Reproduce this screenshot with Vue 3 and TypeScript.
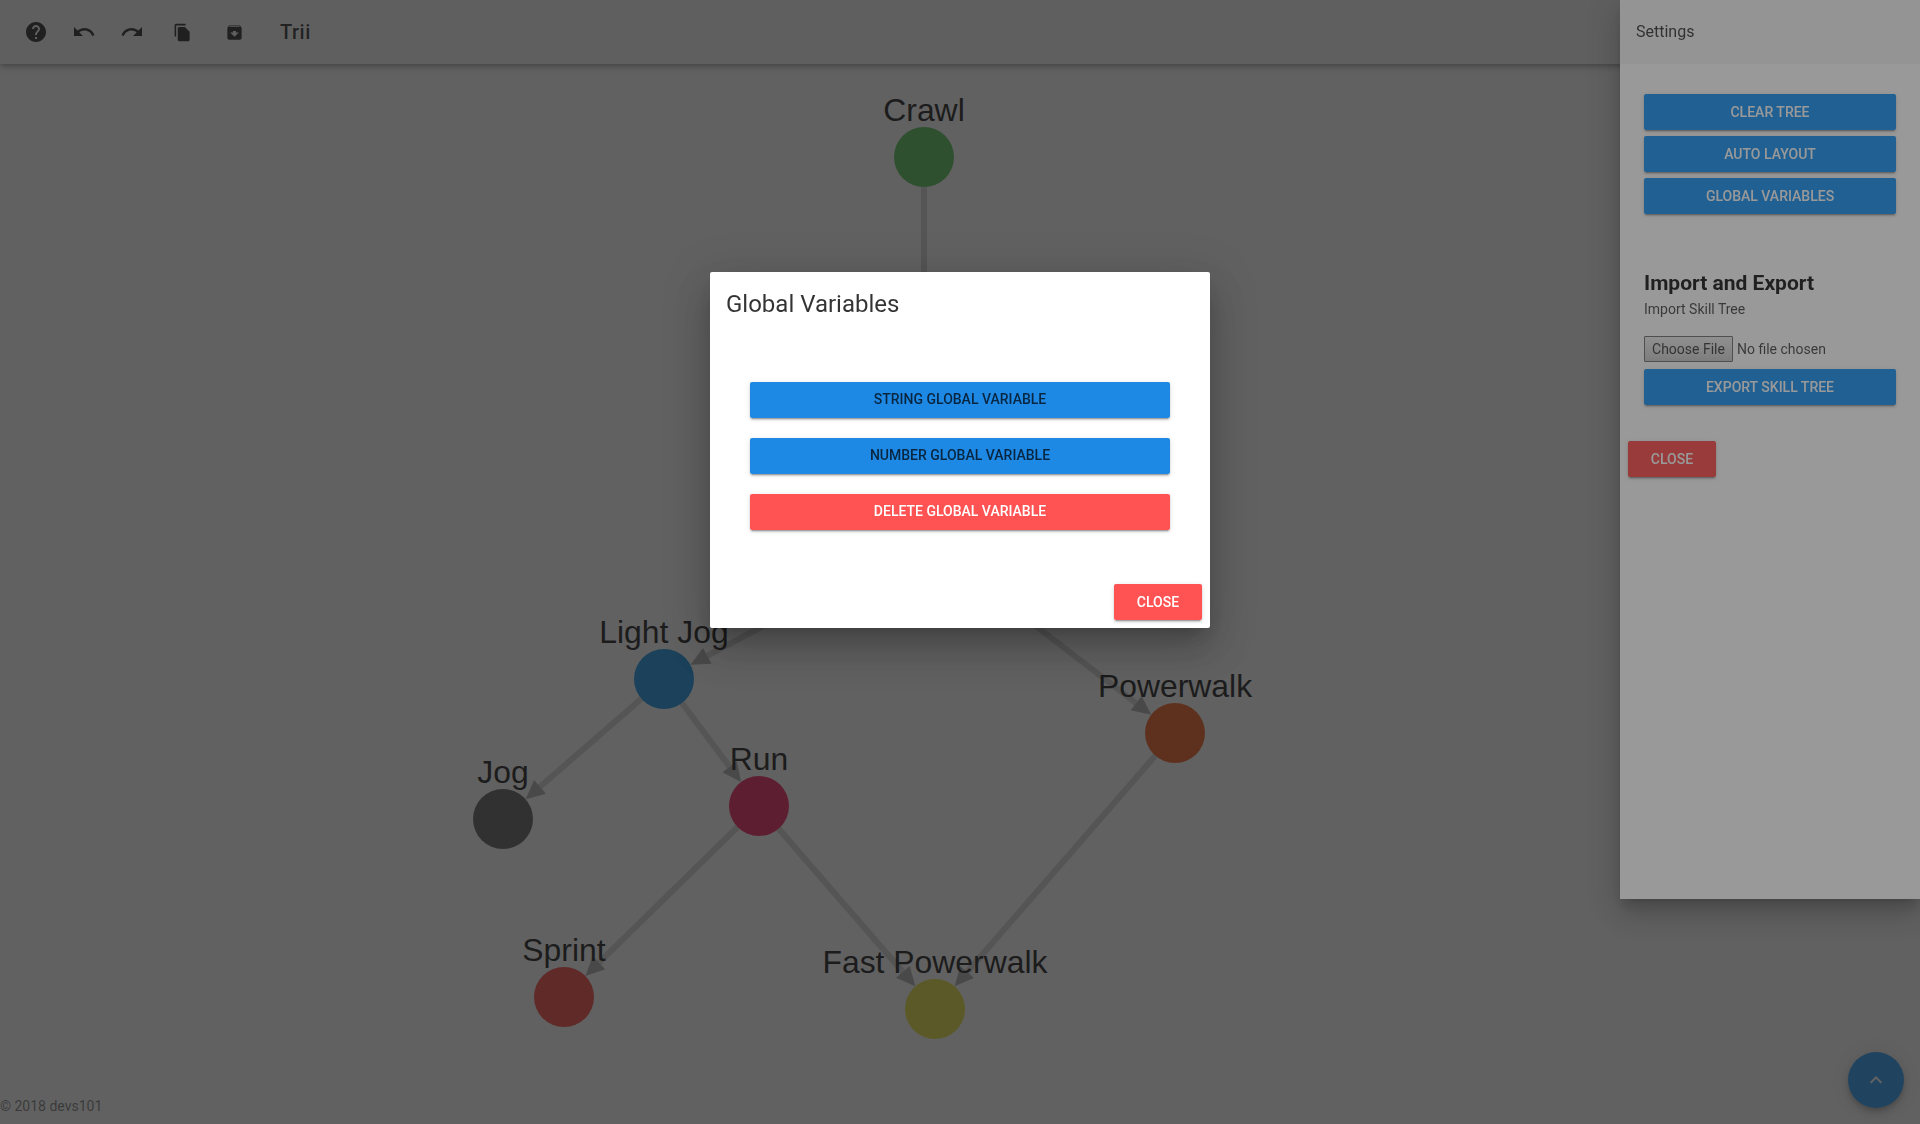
<template>
  <div class="page">
    <header class="toolbar">
      <button v-for="b in toolButtons" :key="b.name" class="icon-btn" :class="b.name" :aria-label="b.name">
        <svg viewBox="0 0 24 24" :class="{ small: b.small }"><path :d="b.path" /></svg>
      </button>
      <div class="app-title">Trii</div>
    </header>

    <main class="canvas">
      <svg class="graph" viewBox="0 64 1920 1024">
        <g v-for="e in edgeShapes" :key="e.key">
          <line :x1="e.x1" :y1="e.y1" :x2="e.x2" :y2="e.y2" class="edge" />
          <polygon :points="e.arrow" class="arrow" />
        </g>
        <g v-for="n in nodes" :key="n.name">
          <circle :cx="n.x" :cy="n.y" r="30" :fill="n.color" />
        </g>
        <text v-for="n in visibleLabels" :key="n.name" :x="n.x" :y="n.y - 36" class="node-label">{{ n.name }}</text>
      </svg>
    </main>

    <footer class="footer">© 2018 devs101</footer>

    <button class="fab" aria-label="open">
      <svg viewBox="0 0 24 24"><path d="M7.41 15.41L12 10.83l4.59 4.58L18 14l-6-6-6 6z" /></svg>
    </button>
  </div>

  <div class="overlay"></div>

  <aside class="drawer">
    <div class="drawer-head">Settings</div>
    <div class="drawer-body">
      <div class="stack">
        <button class="btn primary">Clear Tree</button>
        <button class="btn primary">Auto Layout</button>
        <button class="btn primary">Global Variables</button>
      </div>
      <h3 class="section-title">Import and Export</h3>
      <div class="section-sub">Import Skill Tree</div>
      <input class="file" type="file" />
      <button class="btn primary export">Export Skill Tree</button>
    </div>
    <button class="btn danger drawer-close">Close</button>
  </aside>

  <div class="overlay"></div>

  <div class="dialog-wrap">
    <section class="dialog">
      <h2 class="dialog-title">Global Variables</h2>
      <div class="dialog-content">
        <button class="btn blue">String Global Variable</button>
        <button class="btn blue">Number Global Variable</button>
        <button class="btn danger">Delete Global Variable</button>
      </div>
      <div class="dialog-actions">
        <button class="btn danger close">Close</button>
      </div>
    </section>
  </div>
</template>

<script setup lang="ts">
import { computed } from "vue";

interface GraphNode {
  name: string;
  x: number;
  y: number;
  color: string;
}

const toolButtons = [
  {
    name: "help",
    small: false,
    path: "M12 2C6.48 2 2 6.48 2 12s4.48 10 10 10 10-4.48 10-10S17.52 2 12 2zm1 17h-2v-2h2v2zm2.07-7.75l-.9.92C13.45 12.9 13 13.5 13 15h-2v-.5c0-1.1.45-2.1 1.17-2.83l1.24-1.26c.37-.36.59-.86.59-1.41 0-1.1-.9-2-2-2s-2 .9-2 2H8c0-2.21 1.79-4 4-4s4 1.79 4 4c0 .88-.36 1.68-.93 2.25z",
  },
  {
    name: "undo",
    small: false,
    path: "M12.5 8c-2.65 0-5.05.99-6.9 2.6L2 7v9h9l-3.62-3.62c1.39-1.16 3.16-1.88 5.12-1.88 3.54 0 6.55 2.31 7.6 5.5l2.37-.78C21.08 11.03 17.15 8 12.5 8z",
  },
  {
    name: "redo",
    small: false,
    path: "M18.4 10.6C16.55 8.99 14.15 8 11.5 8c-4.65 0-8.58 3.03-9.96 7.22L3.9 16c1.05-3.19 4.05-5.5 7.6-5.5 1.95 0 3.73.72 5.12 1.88L13 16h9V7l-3.6 3.6z",
  },
  {
    name: "copy",
    small: true,
    path: "M16 1H4c-1.1 0-2 .9-2 2v14h2V3h12V1zm-1 4l6 6v10c0 1.1-.9 2-2 2H7.99C6.89 23 6 22.1 6 21l.01-14c0-1.1.89-2 1.99-2h7z",
  },
  {
    name: "archive",
    small: true,
    path: "M20.54 5.23l-1.39-1.68C18.88 3.21 18.47 3 18 3H6c-.47 0-.88.21-1.16.55L3.46 5.23C3.17 5.57 3 6.02 3 6.5V19c0 1.1.9 2 2 2h14c1.1 0 2-.9 2-2V6.5c0-.48-.17-.93-.46-1.27zM12 17.5L6.5 12H10v-2h4v2h3.5L12 17.5zM5.12 5l.81-1h12l.94 1H5.12z",
  },
];

const nodes: GraphNode[] = [
  { name: "Crawl", x: 924, y: 157, color: "#4fc04f" },
  { name: "Walk", x: 924, y: 540, color: "#ffa726" },
  { name: "Light Jog", x: 664, y: 679, color: "#0f8fe6" },
  { name: "Powerwalk", x: 1175, y: 733, color: "#f25a1c" },
  { name: "Jog", x: 503, y: 819, color: "#5a5a5a" },
  { name: "Run", x: 759, y: 806, color: "#f21a5a" },
  { name: "Sprint", x: 564, y: 997, color: "#f54236" },
  { name: "Fast Powerwalk", x: 935, y: 1009, color: "#e8e03c" },
];

// the node behind the dialog has no readable label in the screenshot
const visibleLabels = computed(() => nodes.filter((n) => n.name !== "Walk"));

const links: [string, string][] = [
  ["Crawl", "Walk"],
  ["Walk", "Light Jog"],
  ["Walk", "Powerwalk"],
  ["Light Jog", "Jog"],
  ["Light Jog", "Run"],
  ["Run", "Sprint"],
  ["Run", "Fast Powerwalk"],
  ["Powerwalk", "Fast Powerwalk"],
];

// line stops at the base of the arrow, arrow tip touches the circle
const edgeShapes = computed(() =>
  links.map(([from, to]) => {
    const a = nodes.find((n) => n.name === from)!;
    const b = nodes.find((n) => n.name === to)!;
    const len = Math.hypot(b.x - a.x, b.y - a.y);
    const ux = (b.x - a.x) / len;
    const uy = (b.y - a.y) / len;
    const tipX = b.x - ux * 30;
    const tipY = b.y - uy * 30;
    const baseX = tipX - ux * 19;
    const baseY = tipY - uy * 19;
    const half = 9;
    return {
      key: from + to,
      x1: a.x + ux * 30,
      y1: a.y + uy * 30,
      x2: baseX,
      y2: baseY,
      arrow: `${tipX},${tipY} ${baseX - uy * half},${baseY + ux * half} ${baseX + uy * half},${baseY - ux * half}`,
    };
  })
);
</script>

<style>
html,
body {
  margin: 0;
  height: 100%;
  overflow: hidden;
}
</style>

<style scoped>
* {
  box-sizing: border-box;
}

.page {
  height: 1124px;
  display: flex;
  flex-direction: column;
  background: #fafafa;
  font-family: Roboto, "Liberation Sans", sans-serif;
  isolation: isolate;
}

.toolbar {
  height: 64px;
  flex: none;
  display: flex;
  align-items: center;
  padding-left: 18px;
  gap: 12px;
  background: #f5f5f5;
  box-shadow: 0 2px 4px -1px rgba(0, 0, 0, 0.2), 0 4px 5px 0 rgba(0, 0, 0, 0.14), 0 1px 10px 0 rgba(0, 0, 0, 0.12);
  position: relative;
  z-index: 1;
}

.icon-btn {
  width: 36px;
  height: 36px;
  padding: 0;
  border: 0;
  background: none;
  display: flex;
  align-items: center;
  justify-content: center;
}

.icon-btn svg {
  width: 24px;
  height: 24px;
  fill: rgba(0, 0, 0, 0.87);
}

.icon-btn svg.small {
  width: 19px;
  height: 19px;
}

.icon-btn.copy {
  margin-left: 2px;
}

.icon-btn.archive {
  margin-left: 4px;
}

.app-title {
  margin-left: 16px;
  font-size: 20px;
  font-weight: 500;
  letter-spacing: 0.5px;
  color: rgba(0, 0, 0, 0.87);
}

.canvas {
  flex: 1;
  min-height: 0;
}

.graph {
  display: block;
  width: 100%;
  height: 100%;
}

.edge {
  stroke: #d2d2d2;
  stroke-width: 6;
}

.arrow {
  fill: #aaaaaa;
}

.node-label {
  font-family: "Liberation Sans", Arial, sans-serif;
  font-size: 31.9px;
  text-anchor: middle;
  fill: #111;
}

.footer {
  height: 36px;
  flex: none;
  display: flex;
  align-items: center;
  font-size: 14px;
  color: rgba(0, 0, 0, 0.54);
}

.fab {
  position: fixed;
  right: 16px;
  bottom: 16px;
  width: 56px;
  height: 56px;
  padding: 0;
  border: 0;
  border-radius: 50%;
  background: #2196f3;
  display: flex;
  align-items: center;
  justify-content: center;
  box-shadow: 0 3px 5px -1px rgba(0, 0, 0, 0.2), 0 6px 10px 0 rgba(0, 0, 0, 0.14), 0 1px 18px 0 rgba(0, 0, 0, 0.12);
}

.fab svg {
  width: 24px;
  height: 24px;
  fill: #fff;
}

.overlay {
  position: fixed;
  inset: 0;
  background: rgba(33, 33, 33, 0.46);
}

.drawer {
  position: fixed;
  top: 0;
  right: 0;
  width: 300px;
  height: 899px;
  background: #fff;
  font-family: Roboto, "Liberation Sans", sans-serif;
  box-shadow: 0 8px 10px -5px rgba(0, 0, 0, 0.2), 0 16px 24px 2px rgba(0, 0, 0, 0.14), 0 6px 30px 5px rgba(0, 0, 0, 0.12);
}

.drawer-head {
  height: 64px;
  display: flex;
  align-items: center;
  padding: 0 0 2px 16px;
  font-size: 16px;
  background: #f5f5f5;
  color: rgba(0, 0, 0, 0.75);
}

.drawer-body {
  padding: 30px 24px 0;
  display: flex;
  flex-direction: column;
}

.stack {
  display: flex;
  flex-direction: column;
  gap: 6px;
}

.btn {
  height: 36px;
  padding: 0;
  border: 0;
  border-radius: 2px;
  font-family: Roboto, "Liberation Sans", sans-serif;
  font-size: 14px;
  font-weight: 500;
  text-transform: uppercase;
  box-shadow: 0 3px 1px -2px rgba(0, 0, 0, 0.2), 0 2px 2px 0 rgba(0, 0, 0, 0.14), 0 1px 5px 0 rgba(0, 0, 0, 0.12);
}

.primary {
  background: #2196f3;
  color: #fff;
}

.blue {
  background: #1e88e5;
  color: rgba(0, 0, 0, 0.72);
}

.danger {
  background: #ff5252;
  color: #fff;
}

.section-title {
  margin: 53px 0 0;
  font-size: 21px;
  line-height: 32px;
  font-weight: 700;
  color: rgba(0, 0, 0, 0.87);
}

.section-sub {
  font-size: 14px;
  line-height: 20px;
  color: rgba(0, 0, 0, 0.7);
}

.file {
  margin-top: 17px;
  height: 26px;
  font-family: Roboto, "Liberation Sans", sans-serif;
  font-size: 14px;
  color: rgba(0, 0, 0, 0.7);
}

.file::file-selector-button {
  width: 89px;
  height: 26px;
  margin-right: 4px;
  padding: 0;
  font: inherit;
  color: rgba(0, 0, 0, 0.7);
  background: linear-gradient(#eeeeee, #cccccc);
  border: 1px solid #767676;
  border-radius: 1px;
}

.export {
  margin-top: 7px;
}

.drawer-close {
  display: block;
  width: 88px;
  margin: 36px 0 0 8px;
}

.dialog-wrap {
  position: fixed;
  inset: 0;
  display: flex;
  justify-content: center;
  align-items: flex-start;
  padding-top: 272px;
}

.dialog {
  width: 500px;
  height: 356px;
  display: flex;
  flex-direction: column;
  background: #fff;
  border-radius: 2px;
  font-family: Roboto, "Liberation Sans", sans-serif;
  box-shadow: 0 11px 15px -7px rgba(0, 0, 0, 0.2), 0 24px 38px 3px rgba(0, 0, 0, 0.14), 0 9px 46px 8px rgba(0, 0, 0, 0.12);
}

.dialog-title {
  margin: 0;
  padding: 16px;
  font-size: 24px;
  line-height: 32px;
  font-weight: 400;
  color: rgba(0, 0, 0, 0.8);
}

.dialog-content {
  flex: 1;
  padding: 46px 40px 0;
  display: flex;
  flex-direction: column;
  gap: 20px;
}

.dialog-content .btn {
  padding-bottom: 2px;
}

.dialog-actions {
  display: flex;
  justify-content: flex-end;
  padding: 0 8px 8px;
}

.close {
  width: 88px;
}
</style>
